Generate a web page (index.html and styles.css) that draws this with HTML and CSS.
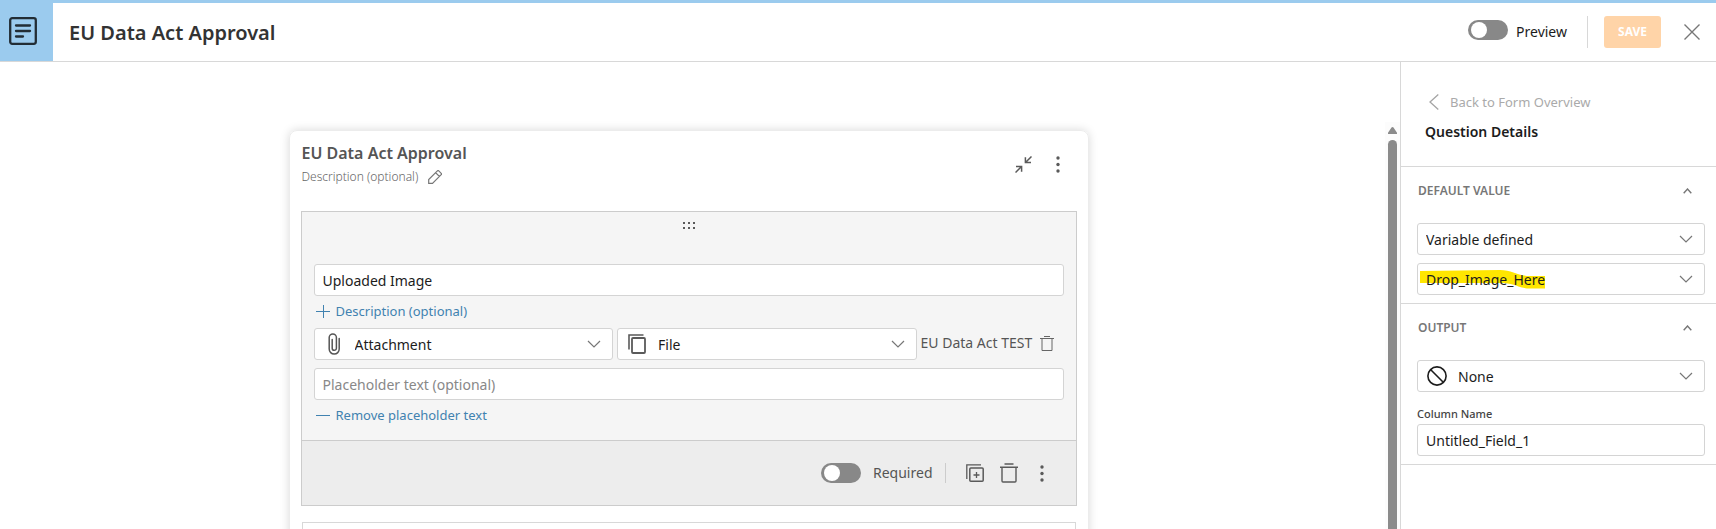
FILE: index.html
```html
<!DOCTYPE html>
<html lang="en">
<head>
    <meta charset="UTF-8">
    <meta name="viewport" content="width=device-width, initial-scale=1.0">
    <title>EU Data Act Approval</title>
    <link rel="stylesheet" href="styles.css">
</head>
<body>
    <header class="topbar">
        <div class="topbar-icon">
            <svg width="28" height="28" viewBox="0 0 28 28" fill="none" stroke="#222d35" stroke-width="2.3" stroke-linecap="round">
                <rect x="1.2" y="1.2" width="25.6" height="25.6" rx="2"/>
                <path d="M7 8.5h14M7 14h14M7 19.5h7"/>
            </svg>
        </div>
        <h1 class="topbar-title">EU Data Act Approval</h1>
        <div class="topbar-actions">
            <label class="toggle">
                <input type="checkbox" class="switch">
                <span>Preview</span>
            </label>
            <span class="topbar-divider"></span>
            <button type="button" class="save-btn" disabled>SAVE</button>
            <button type="button" class="icon-btn" aria-label="Close">
                <svg width="16" height="16" viewBox="0 0 16 16" fill="none" stroke="#777" stroke-width="1.4">
                    <path d="M.5.5l15 15M15.5.5l-15 15"/>
                </svg>
            </button>
        </div>
    </header>

    <div class="layout">
        <main class="canvas">
            <div class="canvas-body">
                <section class="card">
                    <div class="card-header">
                        <div class="card-heading">
                            <h2 class="card-title">EU Data Act Approval</h2>
                            <div class="card-description">
                                <span>Description (optional)</span>
                                <button type="button" class="icon-btn" aria-label="Edit description">
                                    <svg width="14" height="14" viewBox="0 0 14 14" fill="none" stroke="#777" stroke-width="1.2">
                                        <path d="M.7 13.4V9.6L9.4.9a1 1 0 0 1 1.4 0l2.4 2.4a1 1 0 0 1 0 1.4L4.5 13.4zM7.6 2.7l3.8 3.8"/>
                                    </svg>
                                </button>
                            </div>
                        </div>
                        <div class="card-actions">
                            <button type="button" class="icon-btn" aria-label="Collapse">
                                <svg width="17" height="17" viewBox="0 0 17 17" fill="none" stroke="#5a5a5a" stroke-width="1.5">
                                    <path d="M16.5.5l-6 6M10.400 1.200v5.400H16M.5 16.500l6-6M1 10.400h5.600v5.400"/>
                                </svg>
                            </button>
                            <button type="button" class="icon-btn" aria-label="More options">
                                <svg width="4" height="17" viewBox="0 0 4 17" fill="#5a5a5a">
                                    <circle cx="2" cy="2" r="1.7"/><circle cx="2" cy="8.5" r="1.7"/><circle cx="2" cy="15" r="1.7"/>
                                </svg>
                            </button>
                        </div>
                    </div>

                    <div class="question">
                        <div class="question-body">
                            <div class="drag-handle">
                                <svg width="12" height="7" viewBox="0 0 12 7" fill="#5a5a5a">
                                    <path d="M0 0h2v2H0zM5 0h2v2H5zM10 0h2v2h-2zM0 5h2v2H0zM5 5h2v2H5zM10 5h2v2h-2z"/>
                                </svg>
                            </div>
                            <input type="text" class="field" value="Uploaded Image" aria-label="Question title">
                            <button type="button" class="link-btn">
                                <svg width="14" height="14" viewBox="0 0 14 14" stroke="#4182b0" stroke-width="1">
                                    <path d="M0 7.5h14M7.5 1v13"/>
                                </svg>
                                Description (optional)
                            </button>
                            <div class="type-row">
                                <div class="select has-icon">
                                    <svg class="select-icon" width="20" height="22" viewBox="0 0 20 22" fill="none" stroke="#555" stroke-width="1.5" stroke-linecap="round">
                                        <path d="M15.2 5.5v10.6a5 5 0 0 1-10 0V4.6a3.6 3.6 0 0 1 7.2 0v10.6a2.1 2.1 0 0 1-4.2 0V6.6"/>
                                    </svg>
                                    <select aria-label="Question type"><option>Attachment</option></select>
                                    <svg class="select-arrow" width="14" height="8" viewBox="0 0 14 8"><path d="M1 1l6 6 6-6"/></svg>
                                </div>
                                <div class="select has-icon">
                                    <svg class="select-icon" width="20" height="20" viewBox="0 0 20 20" fill="none" stroke="#5a5a5a">
                                        <path d="M2 15.5V1h14.5" stroke-width="1.6"/>
                                        <rect x="5" y="4" width="13" height="15" rx="1" stroke-width="1.8"/>
                                    </svg>
                                    <select aria-label="Attachment kind"><option>File</option></select>
                                    <svg class="select-arrow" width="14" height="8" viewBox="0 0 14 8"><path d="M1 1l6 6 6-6"/></svg>
                                </div>
                                <div class="attached">
                                    <span>EU Data Act TEST</span>
                                    <button type="button" class="icon-btn" aria-label="Remove file">
                                        <svg width="14" height="15" viewBox="0 0 14 15" fill="none" stroke="#666" stroke-width="1">
                                            <path d="M0 2.5h14M4 .5h6M2 2.5v12h10v-12"/>
                                        </svg>
                                    </button>
                                </div>
                            </div>
                            <input type="text" class="field" placeholder="Placeholder text (optional)" aria-label="Placeholder text">
                            <button type="button" class="link-btn">
                                <svg width="14" height="14" viewBox="0 0 14 14" stroke="#4182b0" stroke-width="1">
                                    <path d="M0 7.5h14"/>
                                </svg>
                                Remove placeholder text
                            </button>
                        </div>
                        <div class="question-footer">
                            <label class="toggle required">
                                <input type="checkbox" class="switch">
                                <span>Required</span>
                            </label>
                            <div class="question-actions">
                                <button type="button" class="icon-btn" aria-label="Duplicate">
                                    <svg width="18" height="18" viewBox="0 0 18 18" fill="none" stroke="#5a5a5a">
                                        <path d="M.8 15V.8H15M10.5 8v6M7.5 11h6" stroke-width="1.3"/>
                                        <rect x="3.8" y="4" width="13.4" height="13.2" rx="1" stroke-width="1.5"/>
                                    </svg>
                                </button>
                                <button type="button" class="icon-btn" aria-label="Delete">
                                    <svg width="18" height="20" viewBox="0 0 18 20" fill="none" stroke="#5a5a5a" stroke-width="1.4">
                                        <path d="M0 4.3h18M4.5 1h9M2 4.3V18a1 1 0 0 0 1 1h12a1 1 0 0 0 1-1V4.3"/>
                                    </svg>
                                </button>
                                <button type="button" class="icon-btn" aria-label="More options">
                                    <svg width="4" height="17" viewBox="0 0 4 17" fill="#5a5a5a">
                                        <circle cx="2" cy="2" r="1.7"/><circle cx="2" cy="8.5" r="1.7"/><circle cx="2" cy="15" r="1.7"/>
                                    </svg>
                                </button>
                            </div>
                        </div>
                    </div>

                    <div class="question-next"></div>
                </section>
            </div>
            <div class="scrollbar">
                <svg width="9" height="7" viewBox="0 0 9 7" fill="#8b8b8b"><path d="M4.5 0q.6 0 1 .6L9 5.8V7H0V5.8L3.5.6q.4-.6 1-.6z"/></svg>
                <div class="scrollbar-thumb"></div>
            </div>
        </main>

        <aside class="sidebar">
            <div class="sidebar-header">
                <a href="#" class="back-link">
                    <svg width="10" height="16" viewBox="0 0 10 16" fill="none" stroke="#a5a5a5" stroke-width="1.3"><path d="M9.3.5L1 8l8.3 7.5"/></svg>
                    Back to Form Overview
                </a>
                <h2 class="sidebar-title">Question Details</h2>
            </div>

            <section class="panel">
                <button type="button" class="panel-toggle">
                    DEFAULT VALUE
                    <svg width="9" height="6" viewBox="0 0 9 6" fill="none" stroke="#777" stroke-width="1.4"><path d="M.7 5.3L4.5 1l3.8 4.3"/></svg>
                </button>
                <div class="select">
                    <select aria-label="Default value source"><option>Variable defined</option></select>
                    <svg class="select-arrow" width="14" height="8" viewBox="0 0 14 8"><path d="M1 1l6 6 6-6"/></svg>
                </div>
                <div class="select">
                    <svg class="marker" width="125" height="19" viewBox="0 0 125 19" fill="#ffe600">
                        <path d="M0 1L80 0C92 0 98 6 110 6H125V18.5H110C100 18.5 96 14 84 13L0 13z"/>
                    </svg>
                    <select aria-label="Variable"><option>Drop_Image_Here</option></select>
                    <svg class="select-arrow" width="14" height="8" viewBox="0 0 14 8"><path d="M1 1l6 6 6-6"/></svg>
                </div>
            </section>

            <section class="panel">
                <button type="button" class="panel-toggle">
                    OUTPUT
                    <svg width="9" height="6" viewBox="0 0 9 6" fill="none" stroke="#777" stroke-width="1.4"><path d="M.7 5.3L4.5 1l3.8 4.3"/></svg>
                </button>
                <div class="select has-icon">
                    <svg class="select-icon" width="20" height="20" viewBox="0 0 20 20" fill="none" stroke="#1c1c1c" stroke-width="1.6">
                        <circle cx="10" cy="10" r="9.1"/><path d="M3.5 3.5l13 13"/>
                    </svg>
                    <select aria-label="Output"><option>None</option></select>
                    <svg class="select-arrow" width="14" height="8" viewBox="0 0 14 8"><path d="M1 1l6 6 6-6"/></svg>
                </div>
                <div class="form-group">
                    <label for="columnName">Column Name</label>
                    <input type="text" class="field" id="columnName" value="Untitled_Field_1">
                </div>
            </section>
        </aside>
    </div>
</body>
</html>
```
FILE: styles.css
```css
* {
    box-sizing: border-box;
}

body {
    display: flex;
    flex-direction: column;
    height: 100vh;
    margin: 0;
    overflow: hidden;
    background-color: #fff;
    color: #1c1c1c;
    font-family: "Noto Sans", "Open Sans", sans-serif;
    font-size: 14px;
    line-height: 20px;
}

h1, h2 {
    margin: 0;
}

svg {
    display: block;
    flex: none;
}

button, input, select {
    font: inherit;
    color: inherit;
}

button {
    border: none;
    padding: 0;
    background: none;
    cursor: pointer;
}

/* top bar */
.topbar {
    display: flex;
    align-items: stretch;
    border-top: 3px solid #9bcbee;
    border-bottom: 1px solid #d8d8d8;
    height: 62px;
    flex: none;
}

.topbar-icon {
    display: flex;
    align-items: center;
    justify-content: center;
    width: 53px;
    padding: 0 7px 2px 0;
    background-color: #9bcbee;
}

.topbar-title {
    flex: 1;
    padding: 16px;
    color: #333;
    font-size: 20px;
    font-weight: 600;
    line-height: 28px;
}

.topbar-actions {
    display: flex;
    align-items: center;
    padding-right: 16px;
}

.topbar-divider {
    width: 1px;
    height: 32px;
    margin: 0 16px 0 20px;
    background-color: #d8d8d8;
}

.save-btn {
    width: 57px;
    height: 32px;
    margin-right: 23px;
    border-radius: 3px;
    background-color: #ffd4a8;
    color: #fff;
    font-size: 12px;
    font-weight: 700;
}

.toggle {
    display: flex;
    align-items: center;
    gap: 8px;
}

.switch {
    appearance: none;
    display: flex;
    width: 40px;
    height: 20px;
    margin: 0;
    padding: 2px 3px;
    border-radius: 10px;
    background-color: #888;
}

.switch::before {
    content: "";
    width: 16px;
    height: 16px;
    border-radius: 50%;
    background-color: #fff;
}

.topbar .switch {
    margin-bottom: 4px;
}

/* layout */
.layout {
    display: flex;
    flex: 1;
    min-height: 0;
}

.canvas {
    display: flex;
    flex: 1;
    padding-top: 60px;
    overflow: hidden;
}

.canvas-body {
    flex: 1;
    padding: 8px 24px 0;
}

.card {
    max-width: 800px;
    min-height: 100%;
    margin: 0 auto;
    padding: 11px 11px 0;
    border: 1px solid #ececec;
    border-radius: 8px;
    box-shadow: 0 0 10px rgba(0, 0, 0, 0.15);
}

.card-header {
    display: flex;
    justify-content: space-between;
    padding: 0 17px 24px 1px;
}

.card-title {
    color: #555;
    font-size: 16px;
    font-weight: 600;
    line-height: 22px;
}

.card-description {
    display: flex;
    align-items: center;
    gap: 10px;
    padding-top: 3px;
    color: #666;
    font-size: 12px;
    font-weight: 300;
}

.card-actions {
    display: flex;
    align-items: center;
    gap: 24px;
}

/* question */
.question {
    border: 1px solid #ccc;
    background-color: #f5f5f5;
}

.question-body {
    display: flex;
    flex-direction: column;
    padding: 0 12px 8px;
}

.drag-handle {
    display: flex;
    justify-content: center;
    height: 52px;
    padding-top: 10px;
}

.field {
    width: 100%;
    height: 32px;
    padding: 0 8px;
    border: 1px solid #d4d4d4;
    border-radius: 3px;
    background-color: #fff;
}

.field::placeholder {
    color: #888;
    opacity: 1;
}

.link-btn {
    display: flex;
    align-items: center;
    gap: 6px;
    height: 32px;
    padding: 0 0 2px 2px;
    color: #4182b0;
    font-size: 13px;
}

.type-row {
    display: grid;
    grid-template-columns: 1fr 1fr 143px;
    gap: 4px;
    margin-bottom: 8px;
}

.attached {
    display: flex;
    align-items: center;
    gap: 8px;
    padding-bottom: 2px;
    color: #555;
    white-space: nowrap;
}

/* icon, native select and arrow share one grid cell */
.select {
    display: grid;
    align-items: center;
    height: 32px;
    border: 1px solid #d4d4d4;
    border-radius: 3px;
    background-color: #fff;
}

.select > * {
    grid-area: 1 / 1;
}

.select select {
    appearance: none;
    width: 100%;
    height: 30px;
    padding: 1px 32px 0 8px;
    border: none;
    background: none;
}

.select.has-icon select {
    padding-left: 40px;
}

.select-icon {
    margin-left: 9px;
}

.select-arrow {
    justify-self: end;
    margin-right: 11px;
    fill: none;
    stroke: #777;
    stroke-width: 1.2;
    pointer-events: none;
}

.marker {
    margin-left: 2px;
}

.question-footer {
    display: flex;
    align-items: center;
    justify-content: flex-end;
    height: 65px;
    padding-right: 32px;
    border-top: 1px solid #ccc;
    background-color: #ededed;
}

.required {
    gap: 12px;
    padding-right: 12px;
    color: #555;
}

.question-actions {
    display: flex;
    align-items: center;
    gap: 16px;
    height: 20px;
    padding-left: 20px;
    border-left: 1px solid #ccc;
}

.question-actions .icon-btn:last-child {
    margin-left: 6px;
}

.question-next {
    height: 200px;
    margin: 16px 1px 0;
    border: 1px solid #d8d8d8;
}

/* scrollbar */
.scrollbar {
    display: flex;
    flex-direction: column;
    align-items: center;
    gap: 6px;
    width: 15px;
    margin-left: 8px;
    padding-top: 5px;
    background-color: #fcfcfc;
}

.scrollbar-thumb {
    flex: 1;
    width: 9px;
    border-radius: 5px 5px 0 0;
    background-color: #8b8b8b;
}

/* sidebar */
.sidebar {
    width: 316px;
    border-left: 1px solid #d8d8d8;
}

.sidebar-header {
    padding: 30px 24px 24px;
}

.back-link {
    display: flex;
    align-items: center;
    gap: 11px;
    padding-left: 4px;
    color: #aaa;
    font-size: 13px;
    text-decoration: none;
}

.sidebar-title {
    padding-top: 10px;
    font-size: 14px;
    font-weight: 600;
}

.panel {
    display: flex;
    flex-direction: column;
    gap: 8px;
    padding: 0 11px 8px 16px;
    border-top: 1px solid #d8d8d8;
}

.panel:last-child {
    border-bottom: 1px solid #d8d8d8;
}

.panel-toggle {
    display: flex;
    align-items: center;
    justify-content: space-between;
    height: 48px;
    padding: 0 13px 0 1px;
    color: #777;
    font-size: 12px;
    font-weight: 600;
}

.form-group {
    padding-top: 4px;
}

.form-group label {
    display: block;
    color: #444;
    font-size: 11px;
    font-weight: 500;
}
```
